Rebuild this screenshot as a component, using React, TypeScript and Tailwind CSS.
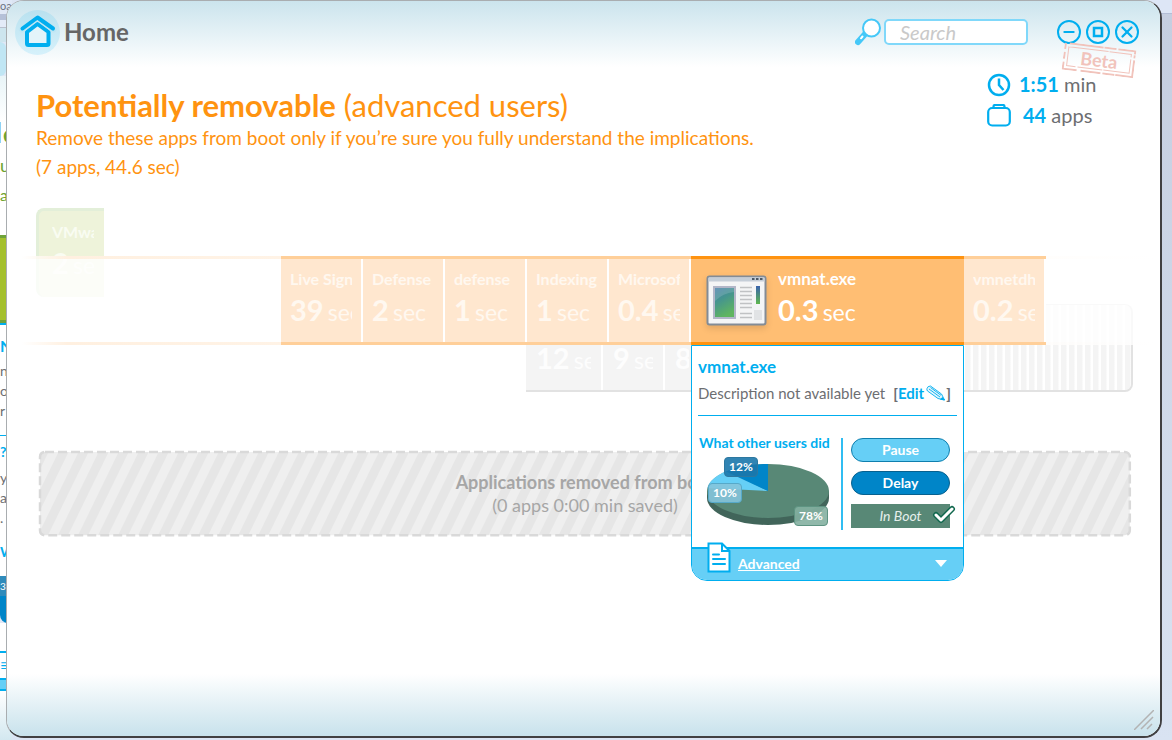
import { Check, Minus, X } from 'lucide-react';
import clsx from 'clsx';

interface BootApp {
    name: string;
    seconds: string;
}

const APPS_BEFORE: BootApp[] = [
    { name: 'Live Sign-in', seconds: '39' },
    { name: 'Defense', seconds: '2' },
    { name: 'defense', seconds: '1' },
    { name: 'Indexing', seconds: '1' },
    { name: 'Microsoft', seconds: '0.4' },
];

const APPS_AFTER: BootApp[] = [{ name: 'vmnetdhcp', seconds: '0.2' }];

// Slices of the window behind, top to bottom
const BACKDROP_ROWS: { cls: string; text?: string }[] = [
    { cls: 'h-[14px] text-[11px] leading-[11px] text-gray-500', text: 'oa' },
    { cls: 'h-[6px] bg-[#b5c0d8]' },
    { cls: 'h-[8px] border-b border-[#b8c0ce] bg-[#e3ebf8]' },
    { cls: 'h-[14px] bg-[#cde5ee]' },
    { cls: 'h-[34px] w-[6px] rounded-r-full bg-[#c0e6f4]' },
    { cls: 'h-[46px] bg-linear-to-b from-[#e9f5f8] to-white' },
    { cls: 'h-[21px] border-l border-[#8fd3f5] bg-white pl-[2px] text-[24px] leading-[24px] font-bold text-[#6da32f]', text: 'e' },
    { cls: 'h-[12px] bg-white' },
    { cls: 'h-[20px] bg-white text-[18px] leading-[20px] text-[#6da32f]', text: 'u' },
    { cls: 'h-[10px] bg-white' },
    { cls: 'h-[20px] bg-white text-[16px] leading-[20px] text-[#6da32f]', text: 'a' },
    { cls: 'h-[30px] bg-white' },
    { cls: 'h-[88px] border-y-[3px] border-[#6fa33a] bg-[#a4c02d]' },
    { cls: 'h-[2px] bg-[#00aeef]' },
    { cls: 'h-[36px] bg-white text-[16px] font-bold leading-[42px] text-[#00aeef]', text: 'N' },
    { cls: 'h-[20px] bg-white text-[14px] leading-[20px] text-[#6d6e71]', text: 'n' },
    { cls: 'h-[20px] bg-white text-[14px] leading-[20px] text-[#6d6e71]', text: 'o' },
    { cls: 'h-[34px] bg-white text-[14px] leading-[20px] text-[#6d6e71]', text: 'r' },
    { cls: 'h-px bg-[#00aeef]' },
    { cls: 'h-[32px] bg-white text-[14px] font-bold leading-[32px] text-[#00aeef]', text: '?' },
    { cls: 'h-[20px] bg-white text-[14px] leading-[20px] text-[#6d6e71]', text: 'y' },
    { cls: 'h-[20px] bg-white text-[14px] leading-[20px] text-[#6d6e71]', text: 'a' },
    { cls: 'h-[34px] bg-white text-[14px] leading-[20px] text-[#6d6e71]', text: '.' },
    { cls: 'h-[34px] bg-white text-[14px] font-bold leading-[20px] text-[#00aeef]', text: 'W' },
    { cls: 'h-[20px] bg-[#2f8bbb] text-[10px] leading-[20px] text-white', text: '3' },
    { cls: 'h-[27px] rounded-bl-lg bg-[#0085c8]' },
    { cls: 'h-[28px] bg-white' },
    { cls: 'h-[27px] border-t-2 border-[#00aeef] bg-white text-[16px] leading-[24px] text-[#00aeef]', text: '≡' },
    { cls: 'h-[13px] border-y-2 border-[#00aeef] bg-[#66cff6]' },
    { cls: 'h-[49px] bg-linear-to-b from-white to-[#d3e8f0]' },
];

const Backdrop = () => (
    <div aria-hidden="true" className="absolute inset-0 flex justify-between overflow-hidden bg-[#dbe4f3]">
        <div className="w-3 overflow-hidden bg-[#e0e8f6]">
            {BACKDROP_ROWS.map((row, i) => (
                <div key={i} className={clsx('overflow-hidden', row.cls)}>{row.text}</div>
            ))}
        </div>
        <div className="flex w-6 flex-col">
            <div className="h-[14px] border-b border-[#b4bed6] bg-[#dde6f6]" />
            <div className="flex-1 bg-linear-to-b from-[#c5cee0] to-[#d9e3f2]" />
        </div>
    </div>
);

const HomeIcon = () => (
    <svg viewBox="0 0 45 45" className="size-[45px]" fill="none" stroke="#00aeef" strokeLinecap="round" strokeLinejoin="round">
        <defs>
            <linearGradient id="halo" x1="0" y1="0" x2="0" y2="1">
                <stop offset="0" stopColor="#b9e1ef" />
                <stop offset="1" stopColor="#d6f1fb" />
            </linearGradient>
        </defs>
        <circle cx="22.500" cy="22.500" r="22.500" fill="url(#halo)" stroke="none" />
        <path d="M12 33.500V22L22.500 14L33.500 22V33.500Q33.500 35 32 35H13.500Q12 35 12 33.500Z" fill="#e3f4fa" strokeWidth="4" />
        <path d="M7 19.500L22.500 7.500L38.500 19.500" stroke="#bfe6f3" strokeWidth="6" />
        <path d="M7.500 18.500L22.500 7.500L38 18.500" strokeWidth="4" />
    </svg>
);

const LensIcon = () => (
    <svg viewBox="0 0 27 28" className="h-7 w-[27px]" fill="none">
        <path d="M11 15L3 24" stroke="#45c8f8" strokeWidth="6" strokeLinecap="round" />
        <path d="M7.500 18.500L6 20.300" stroke="#fff" strokeWidth="2" strokeLinecap="round" />
        <circle cx="16.500" cy="10" r="8.500" fill="#fff" stroke="#45c8f8" strokeWidth="2" />
    </svg>
);

const ClockIcon = () => (
    <svg viewBox="0 0 24 24" className="size-6" fill="none" stroke="#00aeef" strokeWidth="2.500">
        <circle cx="12" cy="12" r="10" />
        <path d="M12 5.500V12L16.500 17" />
    </svg>
);

const CaseIcon = () => (
    <svg viewBox="0 0 24 24" className="size-6" fill="none" stroke="#00aeef" strokeWidth="2.200">
        <rect x="1.200" y="4" width="21.600" height="17.500" rx="4" />
        <path d="M6.500 4V2.500Q6.500 1 8 1H16Q17.500 1 17.500 2.500V4" />
    </svg>
);

const BetaStamp = () => (
    <div className="pointer-events-none absolute top-[45px] right-[25px] flex h-7 w-[72px] rotate-7 items-center justify-center text-[18px] font-bold text-[#f1c3bb]">
        <svg viewBox="0 0 72 28" className="absolute inset-0 size-full" fill="none" stroke="#f1c3bb">
            <path d="M5 1H71V8M71 10V27H18M15 27H1V20M1 17V10M1 7V1" strokeWidth="2" strokeDasharray="34 1 12 2 20 1" />
            <rect x="4.500" y="4.500" width="63" height="19" strokeDasharray="40 1 25 2" />
        </svg>
        <span>Beta</span>
    </div>
);

const ProgramIcon = () => (
    <svg viewBox="0 0 62 52" className="h-[52px] w-[62px] shrink-0 drop-shadow-md">
        <defs>
            <linearGradient id="shot" x1="0" y1="0" x2="0.400" y2="1">
                <stop offset="0" stopColor="#4a7fae" />
                <stop offset="0.450" stopColor="#45948f" />
                <stop offset="1" stopColor="#5fb560" />
            </linearGradient>
            <linearGradient id="bar" x1="0" y1="0" x2="0" y2="1">
                <stop offset="0" stopColor="#3a63ad" />
                <stop offset="1" stopColor="#5fb84f" />
            </linearGradient>
        </defs>
        <rect x="1.500" y="1.500" width="58" height="48" rx="2" fill="#f4f5f6" stroke="#838c96" strokeWidth="2" />
        <rect x="2.500" y="2.500" width="56" height="4" fill="#c5ced8" />
        <path d="M46 4H48.500M50 4H52.500M54 4H56.500" stroke="#4d5966" strokeWidth="2" />
        <rect x="8" y="12" width="21" height="31" fill="url(#shot)" stroke="#b2b6c8" strokeWidth="2" />
        <path d="M9 26Q17 18 28 17V13H9Z" fill="#fff" opacity="0.150" />
        <path d="M34 12.500H46M34 16.500H46M34 20.500H46M34 24.500H46M34 28.500H46M34 32.500H46M34 38.500H46M34 42.500H46" stroke="#c0c2c4" strokeWidth="1.500" />
        <rect x="50" y="11" width="4" height="18" fill="url(#bar)" />
        <rect x="48" y="35" width="8" height="10" fill="#e1e3e5" />
    </svg>
);

const PencilIcon = () => (
    <svg viewBox="0 0 20 16" className="h-4 w-5 shrink-0" fill="none" stroke="#00aeef" strokeWidth="0.900">
        <path d="M1 3.500Q1.500 1 4.500 1L15.500 9L18.500 15L12 13.500L1.500 6Q.5 5 1 3.500Z" fill="#e2f5fd" />
        <path d="M3 4L14 12M4.500 2.500L15 10.300" />
        <path d="M16.500 12.500L18.500 15L14.500 14.200Z" fill="#00aeef" />
    </svg>
);

const DocIcon = () => (
    <svg viewBox="0 0 24 31" className="h-[31px] w-6 shrink-0" fill="none" stroke="#00aeef" strokeWidth="2">
        <path d="M1.500 1.500H15L22.500 9V29.500H1.500Z" fill="#fff" />
        <path d="M15 2V9H22" />
        <path d="M6 12.500H12M6 17H18M6 22H18" strokeLinecap="round" />
    </svg>
);

const UsersPie = () => (
    <div className="relative mt-[5px] h-[70px] w-[130px] text-[12px] leading-[18px] font-bold text-white">
        <svg viewBox="0 0 130 70" className="h-[70px] w-[130px]">
            <path d="M1 34V41A61 27 0 0 0 123 41V34Z" fill="#41655a" />
            <ellipse cx="62" cy="34" rx="61" ry="27" fill="#588876" />
            <path d="M62 34L1.500 31A61 27 0 0 1 22 13.500Z" fill="#66cff6" />
            <path d="M62 34L20 14.500A61 27 0 0 1 62 7Z" fill="#0085c8" />
        </svg>
        <span className="absolute top-0 left-[18px] w-[34px] rounded-sm border border-[#2d78a0] bg-[#1b77ab]/90 text-center">12%</span>
        <span className="absolute top-[26px] left-[2px] w-[34px] rounded-sm border border-[#56a9c9] bg-[#85c4dc]/90 text-center">10%</span>
        <span className="absolute top-[49px] left-[88px] w-[34px] rounded-sm border border-[#5e9482] bg-[#84b0a1]/90 text-center">78%</span>
    </div>
);

const FadedTile = ({ app }: { app: BootApp }) => (
    <button className="h-full w-[82px] border-y-[3px] border-[#ffcf99] bg-[#ffe7cf] text-left text-[#fff8f0]">
        <span className="block h-full border-r-2 border-white px-[9px] pt-[7px]">
            <span className="block overflow-hidden text-[16px] leading-[26px] font-bold whitespace-nowrap">{app.name}</span>
            <span className="block overflow-hidden leading-[36px] whitespace-nowrap">
                <b className="text-[29px]">{app.seconds}</b> <span className="text-[23px]">sec</span>
            </span>
        </span>
    </button>
);

const DetailCard = () => (
    <div className="absolute inset-x-0 top-full flex h-[236px] flex-col overflow-visible rounded-b-2xl border border-[#00aeef] bg-white">
        <div className="px-[6px] pt-[11px]">
            <h2 className="text-[17px] leading-[20px] font-bold text-[#00aeef]">vmnat.exe</h2>
            <p className="mt-[6px] flex items-center text-[15px] leading-[20px] whitespace-nowrap text-[#6d6e71]">
                Description not available yet
                <span className="ml-2 font-bold">[</span>
                <a href="#edit" className="flex items-center gap-[2px] font-bold text-[#00aeef]">Edit <PencilIcon /></a>
                <span className="font-bold">]</span>
            </p>
            <hr className="mt-3 border-[#00aeef]" />
        </div>

        <div className="mt-[18px] flex pr-[13px] pl-[7px]">
            <div className="flex-1">
                <h3 className="text-[14px] leading-[18px] font-bold whitespace-nowrap text-[#00aeef]">What other users did</h3>
                <div className="pl-[7px]"><UsersPie /></div>
            </div>
            <div className="mt-1 flex h-[92px] w-[109px] flex-col gap-[9px] border-l-2 border-[#30bdf2] pl-2 text-[14px] leading-[20px]">
                <button className="h-6 rounded-full border border-[#0f7fae] bg-[#66cff6] font-bold text-white">Pause</button>
                <button className="h-6 rounded-full border border-[#07618f] bg-[#0085c8] font-bold text-white">Delay</button>
                <button className="relative h-6 bg-[#588876] text-[#e5efeb] italic">
                    In Boot
                    <Check className="absolute -top-px -right-[6px] size-6 text-[#12694f]" strokeWidth={6} />
                    <Check className="absolute -top-px -right-[6px] size-6 text-white" strokeWidth={3} />
                </button>
            </div>
        </div>

        <button className="mt-auto flex h-[33px] items-center rounded-b-[15px] border-t-2 border-[#00aeef] bg-[#66cff6] pr-[16px] pb-[3px] pl-[15px] text-white">
            <span className="-mt-3"><DocIcon /></span>
            <span className="ml-[7px] text-[14px] font-bold underline">Advanced</span>
            <svg viewBox="0 0 12 7" className="ml-auto h-[7px] w-3" fill="#fff"><path d="M0 0H12L6 7Z" /></svg>
        </button>
    </div>
);

const GhostTile = ({ seconds, className }: { seconds: string; className: string }) => (
    <div className={clsx('border-r-2 border-white px-[10px] pt-[35px] whitespace-nowrap text-[#fdfdfd]', className)}>
        <span className="block overflow-hidden leading-[36px]">
            <b className="text-[29px]">{seconds}</b> <span className="text-[23px]">sec</span>
        </span>
    </div>
);

const Timeline = () => (
    <section className="relative z-10 mt-[27px] pt-12">
        {/* neighbouring categories showing through the band */}
        <div className="absolute top-0 left-[29px] h-[89px] w-[68px] overflow-hidden rounded-l-lg border-t-[3px] border-l-[3px] border-[#e3efd9] bg-[#eef3da] pt-2 pr-[10px] pl-[13px] whitespace-nowrap text-[#f9fcf2]">
            <span className="block overflow-hidden text-[16px] leading-[26px] font-bold">VMware</span>
            <span className="block overflow-hidden leading-[36px]"><b className="text-[29px]">2</b> <span className="text-[23px]">sec</span></span>
        </div>
        <div className="absolute top-24 right-[27px] left-[519px] flex h-[88px] overflow-hidden rounded-r-lg border-t border-r-2 border-b-2 border-[#e2e2e2] bg-[#f4f4f4]">
            <GhostTile seconds="12" className="w-[77px]" />
            <GhostTile seconds="9" className="w-[62px]" />
            <GhostTile seconds="8" className="w-[36px]" />
            <div className="flex-1 bg-[repeating-linear-gradient(90deg,#f4f4f4_0px,#f4f4f4_5px,#fff_6px,#fff_8px)]" />
        </div>

        <div className="relative grid h-[89px]">
            <div className="mx-[3px] flex flex-col justify-between bg-white/80 [grid-area:1/1]">
                <div className="h-[3px] bg-linear-to-r from-transparent from-1% via-[#fff0e0] via-5% to-transparent" />
                <div className="h-[3px] bg-linear-to-r from-transparent from-1% via-[#fff0e0] via-5% to-transparent" />
            </div>
            <div className="relative flex pl-[274px] [grid-area:1/1]">
                {APPS_BEFORE.map((app, i) => <FadedTile key={i} app={app} />)}
                <div className="relative z-10 h-full w-[273px]">
                    <button className="flex size-full items-center gap-[10px] border-y-[3px] border-[#ff9310] bg-[#ffbe73] pl-[15px] text-left text-white">
                        <ProgramIcon />
                        <span className="self-start pt-[7px] whitespace-nowrap">
                            <span className="block text-[17px] leading-[26px] font-bold">vmnat.exe</span>
                            <span className="block leading-[36px]"><b className="text-[29px]">0.3</b> <span className="text-[23px]">sec</span></span>
                        </span>
                    </button>
                    <DetailCard />
                </div>
                {APPS_AFTER.map((app) => <FadedTile key={app.name} app={app} />)}
            </div>
        </div>
    </section>
);

const RemovedZone = () => (
    <section className="relative mt-[106px] mr-[29px] ml-8 flex h-[85px] flex-col items-center justify-center text-[18px] leading-[23px] text-[#a6a6a6]">
        <svg className="absolute inset-0 size-full overflow-visible">
            <defs>
                <pattern id="stripes" width="18" height="18" patternUnits="userSpaceOnUse" patternTransform="rotate(26)">
                    <rect width="18" height="18" fill="#efefef" />
                    <rect width="9" height="18" fill="#e6e6e6" />
                </pattern>
            </defs>
            <rect x="1" y="1" width="99.800%" height="98%" rx="5" fill="url(#stripes)" stroke="#d9d9d9" strokeWidth="2.500" strokeDasharray="9 4" />
        </svg>
        <strong className="relative">Applications removed from boot</strong>
        <span className="relative">(0 apps 0:00 min saved)</span>
    </section>
);

const windowBtnCls = 'flex size-6 items-center justify-center rounded-full border-2 border-[#00aeef] text-[#00aeef]';

export default function App() {
    return (
        <div className="relative h-screen overflow-hidden pr-[10px] pb-[2px] pl-[6px] font-['Lato','Open_Sans',sans-serif]">
            <Backdrop />
            <div className="relative flex h-full flex-col rounded-[18px] border-t border-r-2 border-b-2 border-l border-t-[#a9adb0] border-r-[#414042] border-b-[#414042] border-l-[#a9adb0] bg-white">
                <div className="pointer-events-none absolute inset-0 flex flex-col justify-between overflow-hidden rounded-[16px]">
                    <div className="h-[66px] bg-linear-to-b from-[#cbe4ed] to-white" />
                    <div className="h-[62px] bg-linear-to-t from-[#c8e2ec] to-white" />
                </div>

                <header className="relative flex h-[62px] shrink-0 items-center pr-[21px] pl-2">
                    <a href="#home" className="flex items-center gap-[4px] text-[24px] font-bold text-[#666666]">
                        <HomeIcon /> Home
                    </a>
                    <label htmlFor="search" className="mr-[2px] ml-auto" aria-label="Search"><LensIcon /></label>
                    <input
                        id="search"
                        type="search"
                        placeholder="Search"
                        className="h-[26px] w-36 rounded-[5px] border-2 border-[#80d8fa] bg-white px-[14px] text-[20px] italic placeholder:text-[#c9c9c9]"
                    />
                    <div className="ml-[29px] flex gap-[5px]">
                        <button className={windowBtnCls} aria-label="Minimize"><Minus className="size-4" strokeWidth={3} /></button>
                        <button className={windowBtnCls} aria-label="Maximize">
                            <svg viewBox="0 0 12 12" className="size-3"><rect x="2" y="2" width="8" height="8" fill="none" stroke="#00aeef" strokeWidth="2.500" /></svg>
                        </button>
                        <button className={windowBtnCls} aria-label="Close"><X className="size-[18px] shrink-0" strokeWidth={3} /></button>
                    </div>
                    <BetaStamp />
                </header>

                <div className="relative flex justify-between pl-[29px] text-[#ff9310]">
                    <div className="pt-6">
                        <h1 className="text-[31px] leading-[36px]"><b>Potentially removable</b> (advanced users)</h1>
                        <p className="text-[19px] leading-[29px]">Remove these apps from boot only if you’re sure you fully understand the implications.</p>
                        <p className="text-[19px] leading-[29px]">(7 apps, 44.6 sec)</p>
                    </div>
                    <div className="w-[173px] pt-[6px] text-[20px] leading-[31px] text-[#6d6e71]">
                        <div className="flex items-center gap-2"><ClockIcon /><span><b className="text-[#00aeef]">1:51</b> min</span></div>
                        <div className="flex items-center gap-3"><CaseIcon /><span><b className="text-[#00aeef]">44</b> apps</span></div>
                    </div>
                </div>

                <Timeline />
                <RemovedZone />

                <svg viewBox="0 0 20 20" className="absolute right-[6px] bottom-[6px] size-5" stroke="#b3b3b3" strokeWidth="1.500">
                    <path d="M0 20L20 0M7 19L19 7M13 19L18 14" />
                </svg>
            </div>
        </div>
    );
}
